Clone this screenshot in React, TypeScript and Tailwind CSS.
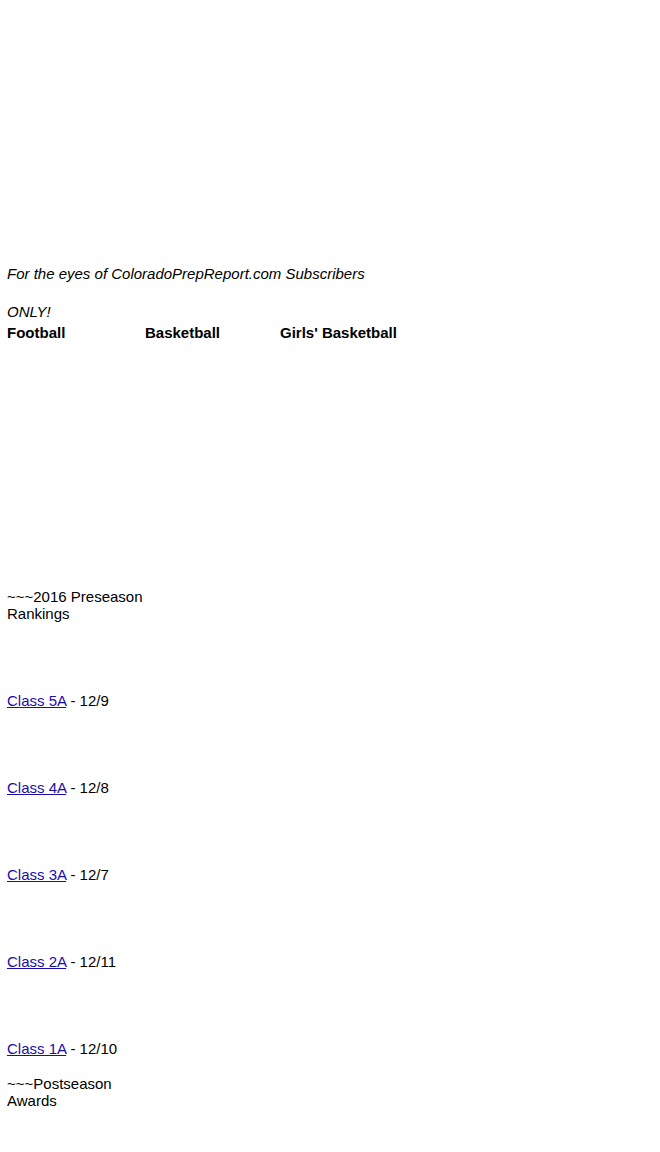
export default function App() {
  return (
    <div
      className="bg-white text-black min-h-[1152px] pl-[7px] pt-[265px] text-[15px] leading-[17px]"
      style={{ fontFamily: '"Liberation Sans", Arial, sans-serif' }}
    >
      <p className="italic">For the eyes of ColoradoPrepReport.com Subscribers</p>
      <p className="italic mt-[21px]">ONLY!</p>
      <div className="flex font-bold mt-[4px]">
        <div className="w-[138px]">Football</div>
        <div className="w-[135px]">Basketball</div>
        <div>Girls' Basketball</div>
      </div>
      <div className="w-[138px] mt-[247px]">
        <p>~~~2016 Preseason Rankings</p>
        {[
          ["Class 5A", "12/9"],
          ["Class 4A", "12/8"],
          ["Class 3A", "12/7"],
          ["Class 2A", "12/11"],
          ["Class 1A", "12/10"],
        ].map(([c, d], i) => (
          <p key={c} className={i === 0 ? "mt-[70px]" : "mt-[70px]"}>
            <a href="#" className="text-[#1a0dab] underline">
              {c}
            </a>{" "}
            - {d}
          </p>
        ))}
        <p className="mt-[18px]">~~~Postseason Awards</p>
      </div>
    </div>
  );
}
